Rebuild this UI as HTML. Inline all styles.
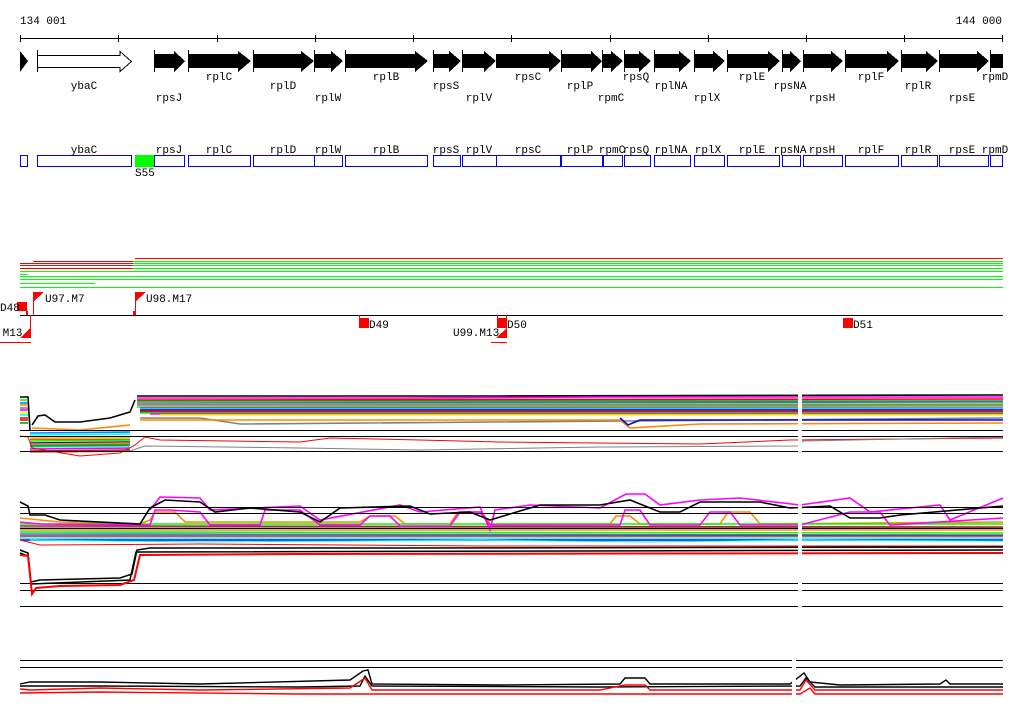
<!DOCTYPE html>
<html><head><meta charset="utf-8"><style>
html,body{margin:0;padding:0;background:#fff;width:1024px;height:714px;overflow:hidden}
svg{display:block}
text{font-family:"Liberation Mono","DejaVu Sans Mono",monospace;font-size:11px;fill:#000}
</style></head><body>
<svg width="1024" height="714" viewBox="0 0 1024 714" shape-rendering="crispEdges">
<!-- ruler -->
<text x="20" y="24">134 001</text>
<text x="1002" y="24" text-anchor="end">144 000</text>
<line x1="20" y1="38.5" x2="1003" y2="38.5" stroke="#000"/>
<g stroke="#000">
<line x1="20.5" y1="35" x2="20.5" y2="42"/><line x1="118.5" y1="35" x2="118.5" y2="42"/><line x1="217.5" y1="35" x2="217.5" y2="42"/><line x1="315.5" y1="35" x2="315.5" y2="42"/><line x1="413.5" y1="35" x2="413.5" y2="42"/><line x1="511.5" y1="35" x2="511.5" y2="42"/><line x1="610.5" y1="35" x2="610.5" y2="42"/><line x1="708.5" y1="35" x2="708.5" y2="42"/><line x1="806.5" y1="35" x2="806.5" y2="42"/><line x1="904.5" y1="35" x2="904.5" y2="42"/><line x1="1002.5" y1="35" x2="1002.5" y2="42"/>
</g>
<!-- gene arrows -->
<g fill="#000">
<polygon points="20,51 28,61 20,72"/>
<polygon points="154,54 174,54 174,51 185,61 174,72 174,68 154,68"/>
<polygon points="188,54 238,54 238,51 251,61 238,72 238,68 188,68"/>
<polygon points="253,54 301,54 301,51 314,61 301,72 301,68 253,68"/>
<polygon points="314,54 331,54 331,51 343,61 331,72 331,68 314,68"/>
<polygon points="345,54 415,54 415,51 428,61 415,72 415,68 345,68"/>
<polygon points="433,54 449,54 449,51 461,61 449,72 449,68 433,68"/>
<polygon points="462,54 484,54 484,51 496,61 484,72 484,68 462,68"/>
<polygon points="496,54 549,54 549,51 561,61 549,72 549,68 496,68"/>
<polygon points="561,54 591,54 591,51 602,61 591,72 591,68 561,68"/>
<polygon points="602,54 611,54 611,51 623,61 611,72 611,68 602,68"/>
<polygon points="624,54 639,54 639,51 651,61 639,72 639,68 624,68"/>
<polygon points="654,54 679,54 679,51 691,61 679,72 679,68 654,68"/>
<polygon points="694,54 713,54 713,51 725,61 713,72 713,68 694,68"/>
<polygon points="727,54 768,54 768,51 780,61 768,72 768,68 727,68"/>
<polygon points="782,54 790,54 790,51 801,61 790,72 790,68 782,68"/>
<polygon points="803,54 831,54 831,51 843,61 831,72 831,68 803,68"/>
<polygon points="845,54 887,54 887,51 899,61 887,72 887,68 845,68"/>
<polygon points="901,54 926,54 926,51 938,61 926,72 926,68 901,68"/>
<polygon points="939,54 977,54 977,51 989,61 977,72 977,68 939,68"/>
<rect x="991" y="54" width="12" height="14"/>
</g>
<polygon points="37.5,55.5 120,55.5 120,51.5 131.5,61.5 120,71.5 120,67.5 37.5,67.5" fill="#fff" stroke="#000"/>
<g stroke="#000">
<line x1="37.5" y1="50" x2="37.5" y2="72"/><line x1="154.5" y1="50" x2="154.5" y2="72"/><line x1="188.5" y1="50" x2="188.5" y2="72"/><line x1="253.5" y1="50" x2="253.5" y2="72"/><line x1="314.5" y1="50" x2="314.5" y2="72"/><line x1="345.5" y1="50" x2="345.5" y2="72"/><line x1="433.5" y1="50" x2="433.5" y2="72"/><line x1="462.5" y1="50" x2="462.5" y2="72"/><line x1="561.5" y1="50" x2="561.5" y2="72"/><line x1="602.5" y1="50" x2="602.5" y2="72"/><line x1="624.5" y1="50" x2="624.5" y2="72"/><line x1="654.5" y1="50" x2="654.5" y2="72"/><line x1="694.5" y1="50" x2="694.5" y2="72"/><line x1="727.5" y1="50" x2="727.5" y2="72"/><line x1="782.5" y1="50" x2="782.5" y2="72"/><line x1="803.5" y1="50" x2="803.5" y2="72"/><line x1="845.5" y1="50" x2="845.5" y2="72"/><line x1="901.5" y1="50" x2="901.5" y2="72"/><line x1="939.5" y1="50" x2="939.5" y2="72"/><line x1="990.5" y1="50" x2="990.5" y2="72"/>
</g>
<g text-anchor="middle">
<text x="84" y="89">ybaC</text><text x="169" y="101">rpsJ</text><text x="219" y="80">rplC</text><text x="283" y="89">rplD</text><text x="328" y="101">rplW</text><text x="386" y="80">rplB</text><text x="446" y="89">rpsS</text><text x="479" y="101">rplV</text><text x="528" y="80">rpsC</text><text x="580" y="89">rplP</text><text x="611" y="101">rpmC</text><text x="636" y="80">rpsQ</text><text x="671" y="89">rplNA</text><text x="707" y="101">rplX</text><text x="752" y="80">rplE</text><text x="790" y="89">rpsNA</text><text x="822" y="101">rpsH</text><text x="871" y="80">rplF</text><text x="918" y="89">rplR</text><text x="962" y="101">rpsE</text><text x="995" y="80">rpmD</text>
</g>
<!-- blue boxes -->
<g fill="none" stroke="#00f">
<rect x="20.5" y="155.5" width="7" height="11"/><rect x="37.5" y="155.5" width="94" height="11"/><rect x="154.5" y="155.5" width="30" height="11"/><rect x="188.5" y="155.5" width="62" height="11"/><rect x="253.5" y="155.5" width="61" height="11"/><rect x="314.5" y="155.5" width="28" height="11"/><rect x="345.5" y="155.5" width="82" height="11"/><rect x="433.5" y="155.5" width="27" height="11"/><rect x="462.5" y="155.5" width="34" height="11"/><rect x="496.5" y="155.5" width="64" height="11"/><rect x="561.5" y="155.5" width="41" height="11"/><rect x="603.5" y="155.5" width="19" height="11"/><rect x="624.5" y="155.5" width="26" height="11"/><rect x="654.5" y="155.5" width="36" height="11"/><rect x="694.5" y="155.5" width="30" height="11"/><rect x="727.5" y="155.5" width="52" height="11"/><rect x="782.5" y="155.5" width="18" height="11"/><rect x="803.5" y="155.5" width="39" height="11"/><rect x="845.5" y="155.5" width="53" height="11"/><rect x="901.5" y="155.5" width="36" height="11"/><rect x="939.5" y="155.5" width="49" height="11"/><rect x="990.5" y="155.5" width="12" height="11"/>
</g>
<rect x="135" y="155" width="19" height="12" fill="#0f0"/>
<text x="135" y="176">S55</text>
<g text-anchor="middle">
<text x="84" y="153">ybaC</text><text x="169" y="153">rpsJ</text><text x="219" y="153">rplC</text><text x="283" y="153">rplD</text><text x="328" y="153">rplW</text><text x="386" y="153">rplB</text><text x="446" y="153">rpsS</text><text x="479" y="153">rplV</text><text x="528" y="153">rpsC</text><text x="580" y="153">rplP</text><text x="612" y="153">rpmC</text><text x="636" y="153">rpsQ</text><text x="671" y="153">rplNA</text><text x="708" y="153">rplX</text><text x="752" y="153">rplE</text><text x="790" y="153">rpsNA</text><text x="822" y="153">rpsH</text><text x="871" y="153">rplF</text><text x="918" y="153">rplR</text><text x="962" y="153">rpsE</text><text x="995" y="153">rpmD</text>
</g>
<!-- coverage lines -->
<g stroke-width="1">
<line x1="135" y1="258.5" x2="1003" y2="258.5" stroke="#f00"/>
<line x1="33" y1="261.5" x2="133" y2="261.5" stroke="#f00"/>
<line x1="20" y1="263.5" x2="133" y2="263.5" stroke="#f00"/>
<line x1="20" y1="265.5" x2="133" y2="265.5" stroke="#f00"/>
<line x1="20" y1="268.5" x2="133" y2="268.5" stroke="#f00"/>
<line x1="133" y1="261.5" x2="1003" y2="261.5" stroke="#0f0"/>
<line x1="133" y1="263.5" x2="1003" y2="263.5" stroke="#0f0"/>
<line x1="133" y1="265.5" x2="1003" y2="265.5" stroke="#0f0"/>
<line x1="133" y1="268.5" x2="1003" y2="268.5" stroke="#0f0"/>
<line x1="20" y1="271.5" x2="1003" y2="271.5" stroke="#0f0"/>
<line x1="20" y1="274.5" x2="28" y2="274.5" stroke="#0f0"/>
<line x1="20" y1="276.5" x2="1003" y2="276.5" stroke="#0f0"/>
<line x1="20" y1="279.5" x2="1003" y2="279.5" stroke="#0f0"/>
<line x1="20" y1="283.5" x2="95" y2="283.5" stroke="#0f0"/>
<line x1="20" y1="287.5" x2="1003" y2="287.5" stroke="#0f0"/>
</g>
<!-- axis + markers -->
<line x1="20" y1="315.5" x2="1003" y2="315.5" stroke="#000"/>
<g fill="#f00">
<rect x="17" y="302" width="10" height="9"/><rect x="26" y="311" width="2" height="4"/>
<rect x="33" y="292" width="1" height="23"/><polygon points="33,292 44,292 33,302"/>
<rect x="135" y="292" width="1" height="23"/><polygon points="135,292 146,292 135,302"/><rect x="133" y="311" width="3" height="4"/>
<rect x="30" y="315" width="1" height="23"/><polygon points="31,327 31,338 20,338"/><rect x="0" y="342" width="31" height="1"/>
<rect x="359" y="315" width="1" height="4"/><rect x="359" y="318" width="10" height="10"/>
<rect x="497" y="315" width="1" height="4"/><rect x="506" y="315" width="1" height="23"/><rect x="497" y="318" width="10" height="10"/><polygon points="507,328 507,338 496,338"/><rect x="491" y="342" width="16" height="1"/>
<rect x="843" y="318" width="10" height="10"/>
</g>
<text x="0" y="311">D48</text><text x="45" y="302">U97.M7</text><text x="146" y="302">U98.M17</text>
<text x="-4" y="336">.M13</text><text x="369" y="328">D49</text><text x="507" y="328">D50</text><text x="453" y="336">U99.M13</text><text x="853" y="328">D51</text>

<!-- plot 1 -->
<g fill="none" stroke-width="1.6" shape-rendering="auto">
<polyline stroke="#000" points="137,396 500,396 1003,395"/>
<polyline stroke="#f0f" points="137,398 400,398 600,397 1003,397"/>
<polyline stroke="#f00" points="137,400 1003,399"/>
<polyline stroke="#0a0" points="137,401 1003,401"/>
<polyline stroke="#08f" points="137,403 1003,402"/>
<polyline stroke="#f80" points="137,404 700,404 1003,404"/>
<polyline stroke="#808080" points="137,405 1003,405"/>
<polyline stroke="#0f0" points="137,407 1003,406"/>
<polyline stroke="#f0f" points="140,408 600,408 1003,408"/>
<polyline stroke="#0ff" points="140,409 1003,409"/>
<polyline stroke="#00f" points="140,410 1003,410"/>
<polyline stroke="#f00" points="140,411 1003,411"/>
<polyline stroke="#a52a2a" points="140,412 1003,412"/>
<polyline stroke="#0f0" points="140,413 1003,413"/>
<polyline stroke="#f0f" points="150,414 1003,414"/>
<polyline stroke="#ff0" points="160,415 1003,415"/>
<polyline stroke="#808080" points="140,418 200,418 240,424 1003,418"/>
<polyline stroke="#f80" points="140,420 500,420 620,420 630,428 700,424 1003,423"/>
<polyline stroke="#00f" points="620,418 628,425 640,420 1003,420"/>
<polyline stroke="#000" points="20,397 28,397 30,430"/>
<polyline stroke="#0f0" points="20,400 28,400"/><polyline stroke="#f80" points="20,405 28,405"/><polyline stroke="#f0f" points="20,410 28,410"/><polyline stroke="#0ff" points="20,415 28,415"/><polyline stroke="#f00" points="20,420 28,420"/><polyline stroke="#08f" points="20,403 28,403"/><polyline stroke="#808080" points="20,408 28,408"/><polyline stroke="#ff0" points="20,413 28,413"/><polyline stroke="#a52a2a" points="20,418 28,418"/><polyline stroke="#0a0" points="20,423 28,423"/>
<polyline stroke="#000" points="32,425 38,416 45,415 55,422 80,422 110,418 130,412 135,400"/>
<polyline stroke="#f80" points="32,428 80,430 130,425"/>
<polyline stroke="#08f" points="30,433 130,432"/>
<polyline stroke="#0ff" points="30,435 130,434"/>
<polyline stroke="#f0f" points="30,437 130,437"/><polyline stroke="#f00" points="30,439 130,439"/><polyline stroke="#0f0" points="30,441 130,440"/><polyline stroke="#00f" points="30,443 130,442"/><polyline stroke="#808080" points="30,445 130,444"/><polyline stroke="#0ff" points="30,447 130,446"/><polyline stroke="#f0f" points="30,449 130,448"/><polyline stroke="#a52a2a" points="30,451 130,450"/><polyline stroke="#ff0" points="30,438 130,438"/><polyline stroke="#f80" points="30,444 130,443"/><polyline stroke="#0a0" points="30,446 130,445"/><polyline stroke="#f00" points="30,452 130,451"/>
<polyline stroke="#f00" stroke-width="1" points="20,436 28,437 32,448 80,456 120,453 135,445 145,437 160,440 300,442 330,438 420,440 500,442 700,444 790,440 1003,438"/>
<polyline stroke="#808080" stroke-width="1" points="30,452 130,451 145,446 300,448 420,450 600,447 798,446 803,441 1003,437"/>
</g>
<g stroke="#000" stroke-width="1">
<line x1="20" y1="430.5" x2="1003" y2="430.5"/><line x1="20" y1="436.5" x2="1003" y2="436.5"/><line x1="20" y1="451.5" x2="1003" y2="451.5"/>
</g>
<rect x="798" y="390" width="4" height="70" fill="#fff"/>

<!-- plot 2 -->
<g fill="none" stroke-width="1.6" shape-rendering="auto">
<polyline stroke="#0f0" points="20,532 1003,533"/><polyline stroke="#f80" points="20,530 1003,530"/><polyline stroke="#08f" points="20,534 1003,535"/><polyline stroke="#f00" points="20,536 1003,536"/><polyline stroke="#808080" points="20,528 1003,528"/><polyline stroke="#0ff" points="20,538 1003,538"/><polyline stroke="#00f" points="20,540 1003,540"/><polyline stroke="#a52a2a" points="20,526 1003,527"/>
<polyline stroke="#f80" points="20,518 60,522 140,524 150,520 155,512 175,512 185,522 360,522 370,516 395,516 405,524 450,524 458,512 482,512 490,524 610,524 616,516 630,516 640,524 720,524 728,512 750,512 760,524 1003,522"/>
<polyline stroke="#0f0" points="20,524 1003,524"/>
<polyline stroke="#f0f" points="20,522 40,524 150,525 155,510 170,510 200,512 210,525 260,525 265,510 300,510 320,525 360,525 370,516 390,516 400,526 450,526 460,512 480,512 490,525 620,525 625,510 640,510 650,525 700,525 710,512 730,512 740,525 800,525 850,512 880,512 890,525 1003,518"/>
<polyline stroke="#f0f" points="150,510 160,497 200,498 210,510 300,506 320,520 400,505 420,512 480,507 490,530 495,510 530,505 600,508 626,494 645,494 660,505 700,500 740,498 800,505 850,498 870,512 940,505 950,520 1003,498"/>
<polyline stroke="#000" points="20,502 28,506 30,515 45,515 60,520 140,524 150,508 165,500 200,502 215,512 250,508 300,512 320,522 340,508 410,506 430,514 470,512 490,520 540,505 600,505 630,500 660,512 680,512 700,502 760,502 790,508 830,506 850,518 880,518 900,515 1003,506"/>
<polyline stroke="#f00" stroke-width="1" points="20,540 40,545 200,544 480,546 800,546 1003,546"/>
<polyline stroke="#0ff" stroke-width="1" points="30,540 200,542 480,540 650,542 800,540 1003,541"/>
</g>
<g stroke="#000" stroke-width="1">
<line x1="20" y1="507.5" x2="1003" y2="507.5"/><line x1="20" y1="513.5" x2="1003" y2="513.5"/><line x1="20" y1="528.5" x2="1003" y2="528.5"/><line x1="20" y1="583.5" x2="1003" y2="583.5"/><line x1="20" y1="590.5" x2="1003" y2="590.5"/><line x1="20" y1="606.5" x2="1003" y2="606.5"/>
</g>
<g fill="none" stroke-width="1.5" shape-rendering="auto">
<polyline stroke="#000" points="20,550 28,553 31,582 40,580 120,578 132,574 137,550 150,548 400,548 1003,547"/>
<polyline stroke="#000" points="20,553 28,556 31,584 130,580 136,552 1003,550"/>
<polyline stroke="#f00" stroke-width="2" points="20,555 28,556 32,594 36,588 60,586 120,585 134,580 140,555 300,554 1003,553"/>
</g>
<rect x="798" y="490" width="4" height="125" fill="#fff"/>

<!-- plot 3 -->
<g stroke="#000" stroke-width="1">
<line x1="20" y1="660.5" x2="1003" y2="660.5"/><line x1="20" y1="667.5" x2="1003" y2="667.5"/>
</g>
<g fill="none" stroke-width="1.4" shape-rendering="auto">
<polyline stroke="#000" points="20,684 30,682 100,682 200,684 350,680 363,671 368,670 372,684 500,685 620,684 625,678 645,678 650,684 790,684 804,673 810,682 840,685 940,684 946,680 950,684 1003,684"/>
<polyline stroke="#000" points="20,686 100,686 300,687 360,686 365,676 372,686 600,687 800,686 806,678 815,687 1003,687"/>
<polyline stroke="#f00" points="20,689 30,690 100,688 200,690 350,688 365,678 372,690 600,690 625,685 645,685 650,690 800,690 806,680 815,690 1003,690"/>
<polyline stroke="#f00" points="20,693 100,692 300,694 600,694 800,694 810,688 815,694 1003,694"/>
</g>
<rect x="792" y="655" width="4" height="50" fill="#fff"/>
</svg>
</body></html>
